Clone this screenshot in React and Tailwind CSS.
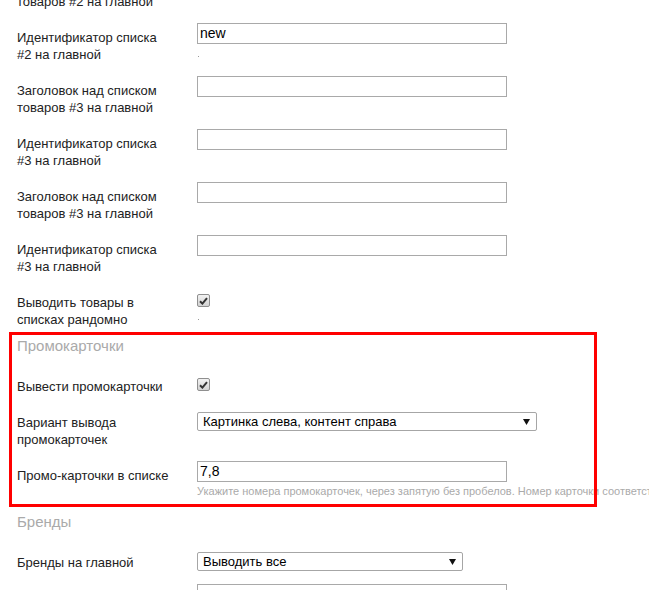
import React from 'react';

const Label = ({ children }) => (
  <div className="w-[197px] shrink-0 whitespace-nowrap pl-[17px] pt-[6px] text-[13px] leading-[17px] text-[#222]">
    {children}
  </div>
);

const Row = ({ label, className = '', children }) => (
  <div className={`flex ${className}`}>
    <Label>{label}</Label>
    <div className="min-w-0">{children}</div>
  </div>
);

const TextInput = ({ value = '' }) => (
  <input
    type="text"
    defaultValue={value}
    className="block h-[21px] w-[310px] border border-[#a9a9a9] bg-white px-[2px] text-[14px] text-black outline-none"
  />
);

const Select = ({ value, width }) => (
  <div
    className={`mt-[4px] flex h-[19px] items-center justify-between rounded-[2px] border border-[#a6a6a6] bg-white pl-[5px] pr-[6px] text-[13px] leading-none text-black ${width}`}
  >
    <span>{value}</span>
    <svg width="7" height="6" viewBox="0 0 7 6">
      <path d="M0 0h7L3.5 6z" fill="#111" />
    </svg>
  </div>
);

const Checkbox = () => (
  <div className="mt-[6px] flex h-[13px] w-[13px] items-center justify-center rounded-[2px] border border-[#8f8f8f] bg-linear-to-b from-[#f2f2f2] to-[#d2d2d2]">
    <svg width="9" height="8" viewBox="0 0 9 8">
      <path d="M1 4.2l2.4 2.4L8 1.2" stroke="#333" strokeWidth="2" fill="none" />
    </svg>
  </div>
);

const Dot = () => <div className="ml-[1px] mt-[12px] h-px w-px bg-[#999]" />;

const Title = ({ children, className = '' }) => (
  <div className={`pl-[17px] text-[15px] leading-[20px] text-[#aaa] ${className}`}>{children}</div>
);

export default function App() {
  return (
    <div className="h-[590px] w-full overflow-hidden bg-white font-['Liberation_Sans',Arial,sans-serif]">
      <div className="-mt-[30px]">
        <Row label={<>Заголовок над списком<br />товаров #2 на главной</>}>
          <TextInput />
        </Row>
        <Row className="mt-[13px]" label={<>Идентификатор списка<br />#2 на главной</>}>
          <TextInput value="new" />
          <Dot />
        </Row>
        <Row className="mt-[13px]" label={<>Заголовок над списком<br />товаров #3 на главной</>}>
          <TextInput />
        </Row>
        <Row className="mt-[13px]" label={<>Идентификатор списка<br />#3 на главной</>}>
          <TextInput />
        </Row>
        <Row className="mt-[13px]" label={<>Заголовок над списком<br />товаров #3 на главной</>}>
          <TextInput />
        </Row>
        <Row className="mt-[13px]" label={<>Идентификатор списка<br />#3 на главной</>}>
          <TextInput />
        </Row>
        <Row className="mt-[13px]" label={<>Выводить товары в<br />списках рандомно</>}>
          <Checkbox />
          <Dot />
        </Row>

        <div className="relative mt-[8px]">
          <Title>Промокарточки</Title>
          <Row className="mt-[16px]" label="Вывести промокарточки">
            <Checkbox />
          </Row>
          <Row className="mt-[13px]" label={<>Вариант вывода<br />промокарточек</>}>
            <Select value="Картинка слева, контент справа" width="w-[340px]" />
          </Row>
          <Row className="mt-[13px]" label="Промо-карточки в списке">
            <TextInput value="7,8" />
            <div className="mt-[2px] whitespace-nowrap text-[11px] leading-[15px] text-[#aaa]">
              Укажите номера промокарточек, через запятую без пробелов. Номер карточки соответствует её порядку в списке
            </div>
          </Row>
          {/* annotation frame drawn over the section */}
          <div className="pointer-events-none absolute -top-[4px] -bottom-[8px] left-[9px] w-[588px] border-[3px] border-[#ff0000]" />
        </div>

        <Title className="mt-[13px]">Бренды</Title>
        <Row className="mt-[16px]" label="Бренды на главной">
          <Select value="Выводить все" width="w-[266px]" />
        </Row>
        <Row className="mt-[13px]" label="Заголовок брендов">
          <TextInput />
        </Row>
      </div>
    </div>
  );
}
